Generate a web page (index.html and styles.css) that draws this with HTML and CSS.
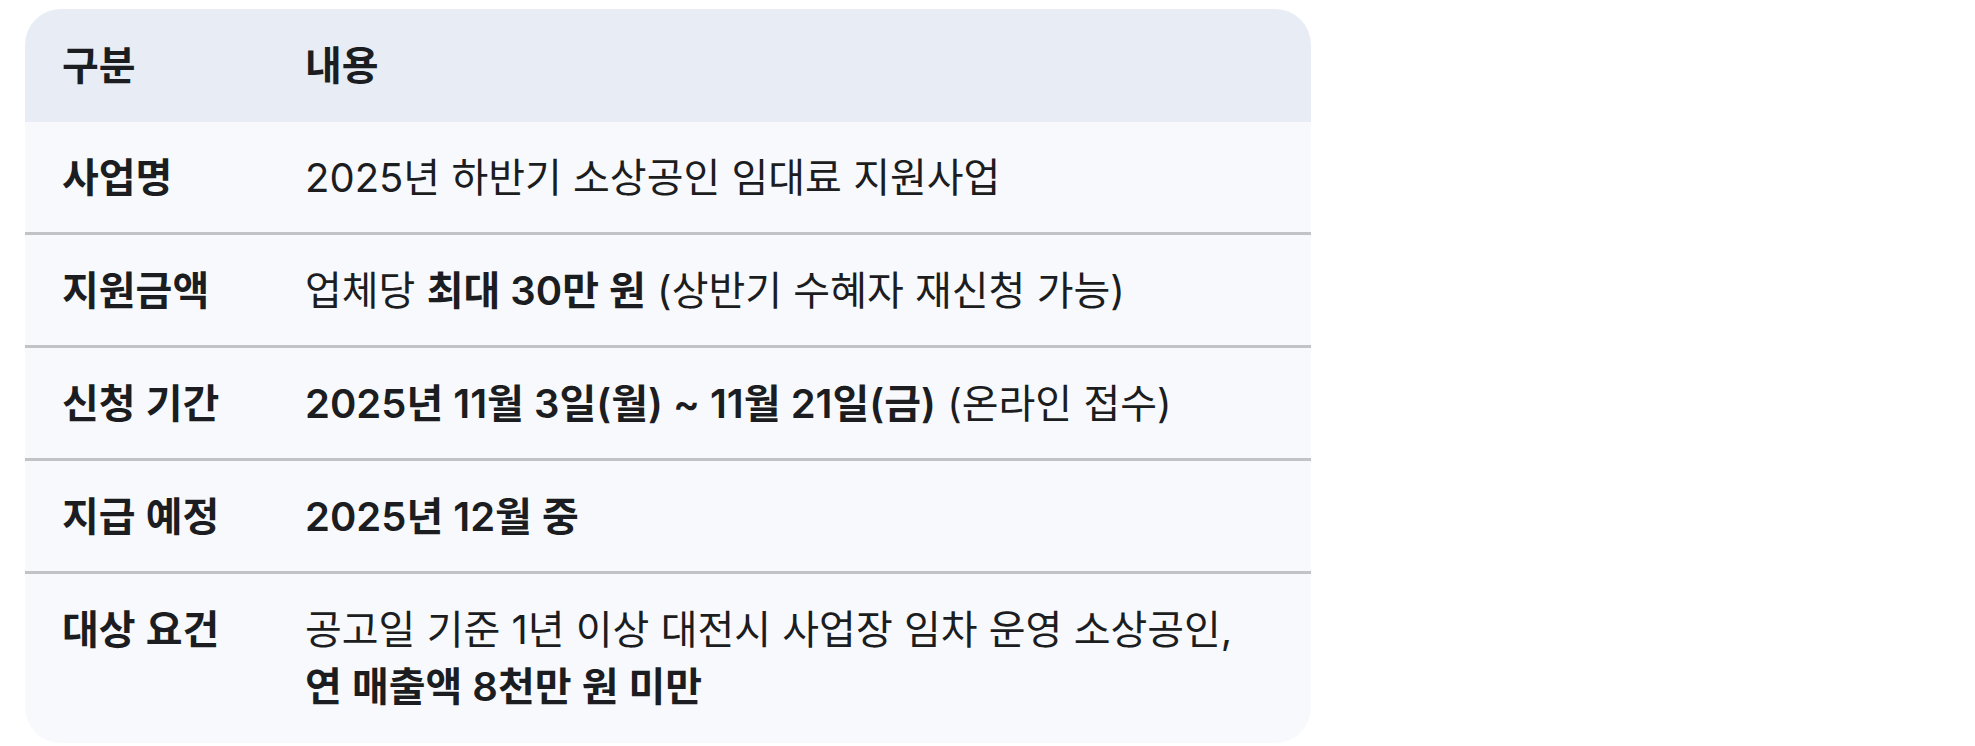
FILE: index.html
```html
<!DOCTYPE html>
<html lang="ko">
<head>
<meta charset="utf-8">
<title>지원사업 안내</title>
<link rel="stylesheet" href="styles.css">
</head>
<body>
<div class="info-table">
  <div class="row head">
    <div class="label">구분</div>
    <div class="value">내용</div>
  </div>
  <div class="row">
    <div class="label">사업명</div>
    <div class="value">2025년 하반기 소상공인 임대료 지원사업</div>
  </div>
  <div class="row">
    <div class="label">지원금액</div>
    <div class="value">업체당 <b>최대 30만 원</b> (상반기 수혜자 재신청 가능)</div>
  </div>
  <div class="row">
    <div class="label">신청 기간</div>
    <div class="value"><b>2025년 11월 3일(월) ~ 11월 21일(금)</b> (온라인 접수)</div>
  </div>
  <div class="row">
    <div class="label">지급 예정</div>
    <div class="value"><b>2025년 12월 중</b></div>
  </div>
  <div class="row last">
    <div class="label">대상 요건</div>
    <div class="value">공고일 기준 1년 이상 대전시 사업장 임차 운영 소상공인,<br><b>연 매출액 8천만 원 미만</b></div>
  </div>
</div>
</body>
</html>
```

FILE: styles.css
```css
html, body {
  margin: 0;
  padding: 0;
  background: #ffffff;
}
body {
  padding: 9px 0 0 25px;
  font-family: "Inter", "Noto Sans CJK KR", sans-serif;
  color: #1c1d20;
}
.info-table {
  width: 1286px;
  border-radius: 36px;
  overflow: hidden;
  background: #f7f9fd;
}
.row {
  display: grid;
  grid-template-columns: 206px 1fr;
  column-gap: 37px;
  padding: 27px 37px 26px;
  font-size: 40px;
  line-height: 57px;
  border-bottom: 3px solid #c2c3c7;
}
.row.head {
  background: #e8ecf4;
  border-bottom: none;
  padding: 28px 37px;
}
.row.last {
  border-bottom: none;
  padding-top: 27px;
  padding-bottom: 28px;
}
.label {
  font-weight: 600;
}
.head .value {
  font-weight: 600;
}
.value b {
  font-weight: 600;
}
```
